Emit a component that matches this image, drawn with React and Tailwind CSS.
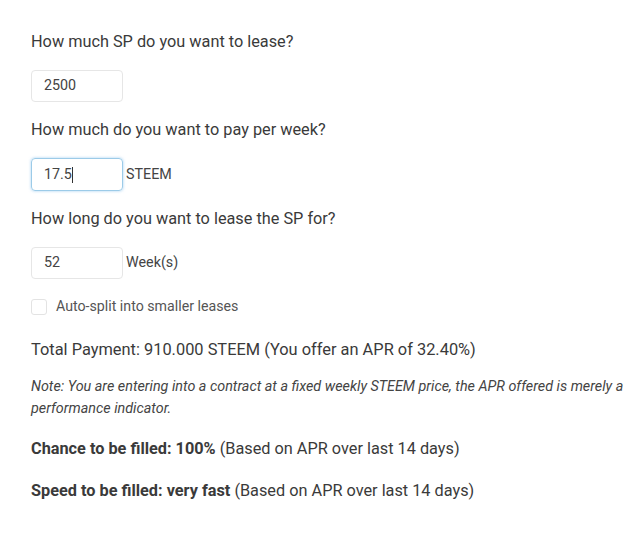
import React from "react";

export default function App() {
  return (
    <div className="w-[640px] h-[533px] bg-white text-[#444] pl-[31px]" style={{ fontFamily: "Roboto, sans-serif" }}>
      <div className="pt-[32px] text-[16.3px] leading-[20px] text-[#3a3a3a]">How much SP do you want to lease?</div>
      <div className="mt-[18px] flex items-center">
        <div className="w-[92px] h-[32px] border border-[#e6e6e6] rounded-[4px] flex items-center pl-[12px] text-[14.3px] text-[#444]">2500</div>
      </div>
      <div className="mt-[18px] text-[16.3px] leading-[20px] text-[#3a3a3a]">How much do you want to pay per week?</div>
      <div className="mt-[18px] flex items-center">
        <div className="w-[92px] h-[33px] border border-[#9ccbe8] rounded-[4px] shadow-[0_0_3px_rgba(102,175,233,0.6)] flex items-center pl-[12px] text-[14.3px] text-[#444]">
          17.5<span className="inline-block w-px h-[16px] bg-[#333]"></span>
        </div>
        <span className="ml-[3px] text-[14.3px] text-[#444]">STEEM</span>
      </div>
      <div className="mt-[18px] text-[16.3px] leading-[20px] text-[#3a3a3a]">How long do you want to lease the SP for?</div>
      <div className="mt-[18px] flex items-center">
        <div className="w-[92px] h-[32px] border border-[#e6e6e6] rounded-[4px] flex items-center pl-[12px] text-[14.3px] text-[#444]">52</div>
        <span className="ml-[3px] text-[14.3px] text-[#444]">Week(s)</span>
      </div>
      <div className="mt-[17px] flex items-center">
        <div className="w-[16px] h-[16px] border border-[#e3e3e3] rounded-[3px]"></div>
        <span className="ml-[9px] text-[14.2px] text-[#555]">Auto-split into smaller leases</span>
      </div>
      <div className="mt-[23px] text-[16.4px] leading-[20px] text-[#3a3a3a]">Total Payment: 910.000 STEEM (You offer an APR of 32.40%)</div>
      <div className="mt-[16px] text-[14.35px] leading-[22px] italic text-[#444] pr-[2px]">
        Note: You are entering into a contract at a fixed weekly STEEM price, the APR offered is merely a performance indicator.
      </div>
      <div className="mt-[19px] text-[16.3px] leading-[20px] text-[#3a3a3a]"><b className="font-bold">Chance to be filled: 100%</b> (Based on APR over last 14 days)</div>
      <div className="mt-[22px] text-[16.3px] leading-[20px] text-[#3a3a3a]"><b className="font-bold">Speed to be filled: very fast</b> (Based on APR over last 14 days)</div>
    </div>
  );
}
